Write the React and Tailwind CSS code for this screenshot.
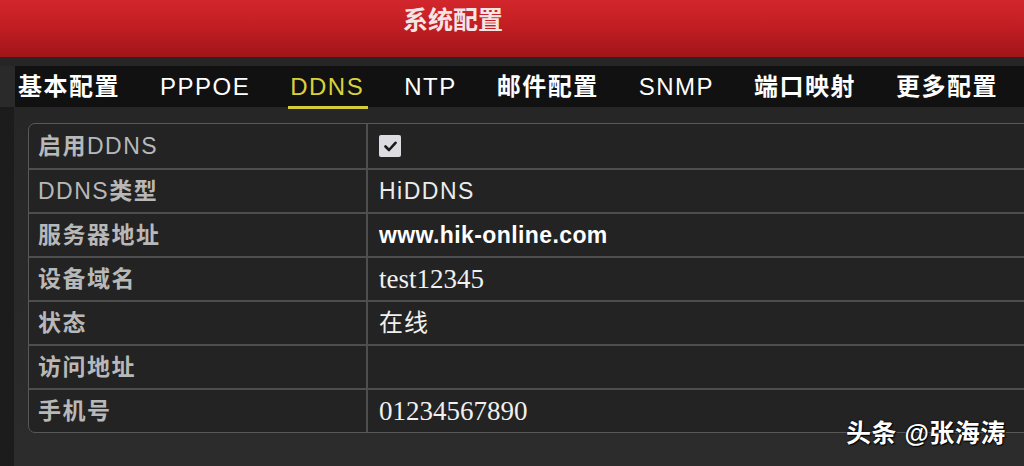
import React from "react";

const SANS = { fontFamily: '"Liberation Sans", Arial, "Noto Sans CJK SC", sans-serif' };
const SERIF = { fontFamily: '"Liberation Serif", "Times New Roman", "Noto Sans CJK SC", serif' };

const tabs = [
  { t: "基本配置", cjk: true },
  { t: "PPPOE" },
  { t: "DDNS", active: true },
  { t: "NTP" },
  { t: "邮件配置", cjk: true },
  { t: "SNMP" },
  { t: "端口映射", cjk: true },
  { t: "更多配置", cjk: true },
];

function Check() {
  return (
    <div className="w-[22px] h-[22px] bg-[#dcdce2] rounded-[2px] flex items-center justify-center">
      <svg width="13" height="11" viewBox="0 0 13 11">
        <path d="M1.5 5.5 L5 9 L11.5 1.8" fill="none" stroke="#1a1a1a" strokeWidth="2.6" strokeLinecap="round" strokeLinejoin="round" />
      </svg>
    </div>
  );
}

const rows = [
  { label: [["启用", true], ["DDNS", false]], value: <Check /> },
  { label: [["DDNS", false], ["类型", true]], value: <span className="text-[23px] tracking-[1.5px] text-[#ececec]" style={SANS}>HiDDNS</span> },
  { label: [["服务器地址", true]], value: <span className="text-[23px] tracking-[0.4px] text-white font-bold" style={SANS}>www.hik-online.com</span> },
  { label: [["设备域名", true]], value: <span className="text-[27px] text-[#f0f0f0]" style={SERIF}>test12345</span> },
  { label: [["状态", true]], value: <span className="text-[24px] tracking-[1px] text-[#f0f0f0]" style={SERIF}>在线</span> },
  { label: [["访问地址", true]], value: null },
  { label: [["手机号", true]], value: <span className="text-[27px] text-[#f0f0f0]" style={SERIF}>01234567890</span> },
];

export default function App() {
  return (
    <div className="relative w-[1024px] h-[466px] overflow-hidden bg-[#2a2a2a] flex flex-col">
      <div className="h-[57px] shrink-0 bg-linear-to-b from-[#d2272c] via-[#c01d22] to-[#a0151a] pl-[403px] pt-[6px]">
        <span className="text-[25px] leading-[28px] font-bold tracking-[0px] text-[#f6e4e4]" style={SANS}>系统配置</span>
      </div>
      <div className="h-[9px] shrink-0 bg-[#262626]" />
      <div className="flex h-[41px] shrink-0">
        <div className="w-[15px] shrink-0 bg-[#2a2a2a]" />
        <div className="flex-1 min-w-0 bg-[#111111] flex items-center gap-[40px] pl-[3px]">
          {tabs.map((tb) => (
            <div key={tb.t} className="relative shrink-0">
              <span
                className={
                  "text-[24px] leading-[30px] tracking-[1.5px] " +
                  (tb.cjk ? "font-bold " : "") +
                  (tb.active ? "text-[#d9d13c]" : "text-white")
                }
                style={SANS}
              >
                {tb.t}
              </span>
              {tb.active && <div className="absolute -left-[2px] -right-[4px] -bottom-[7px] h-[3px] bg-[#d6cc3a]" />}
            </div>
          ))}
        </div>
      </div>
      <div className="flex flex-1 min-h-0">
        <div className="w-[14px] shrink-0 bg-[#1c1c1c]" />
        <div className="flex-1 min-w-0 overflow-hidden bg-linear-to-b from-[#262626] to-[#2c2c2c] pl-[14px] pt-[16px]">
          <div className="w-[1100px] border border-[#585858] rounded-l-[7px] overflow-hidden bg-[#232323]">
            {rows.map((r, i) => (
              <div key={i} className={"flex h-[44px] " + (i > 0 ? "border-t-2 border-[#4e4e4e]" : "")}>
                <div className="w-[339px] shrink-0 flex items-center pl-[9px] border-r-2 border-[#4e4e4e]">
                  <span className="text-[23px] tracking-[1.5px] text-[#b8b8b8]" style={SANS}>
                    {r.label.map(([txt, b], k) => (
                      <span key={k} className={b ? "font-bold" : ""}>{txt}</span>
                    ))}
                  </span>
                </div>
                <div className="flex-1 flex items-center pl-[11px]">{r.value}</div>
              </div>
            ))}
          </div>
        </div>
      </div>
      <div
        className="absolute left-[846px] top-[416px] text-[25px] leading-[34px] tracking-[0.5px] text-white whitespace-nowrap font-bold"
        style={{ ...SANS, textShadow: "1px 1px 1px #000, 0 0 2px #000" }}
      >
        头条 @张海涛
      </div>
    </div>
  );
}
